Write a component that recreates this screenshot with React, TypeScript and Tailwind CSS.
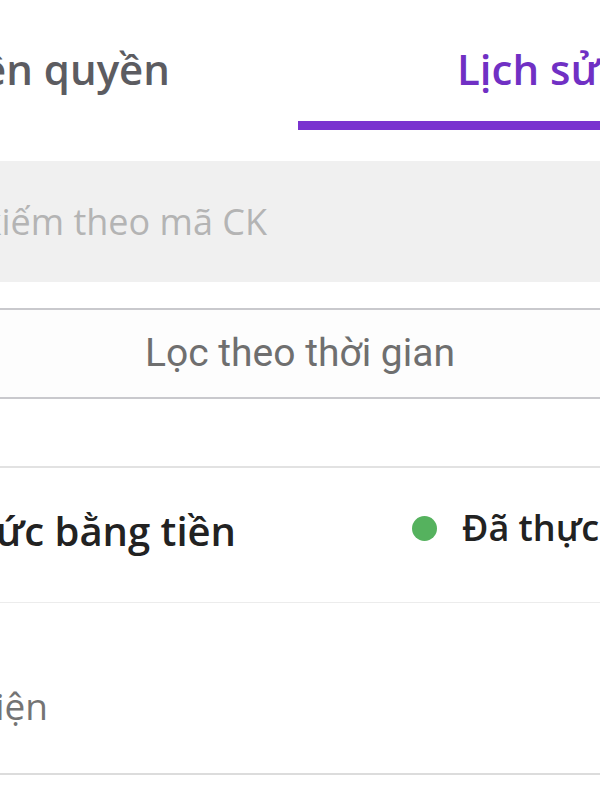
import React from 'react';

const openSans = { fontFamily: '"Open Sans", "Noto Sans", sans-serif' };

export default function App() {
  return (
    <div className="w-[600px] h-[800px] overflow-hidden bg-white" style={openSans}>
      {/* Tabs */}
      <div className="flex h-[130px]">
        <div className="w-[298px] shrink-0 flex justify-end pr-[128px] pt-[48px]">
          <span className="whitespace-nowrap text-[42px] leading-[42px] font-semibold text-[#5c5c61]">
            Thực hiện quyền
          </span>
        </div>
        <div className="w-[468px] shrink-0 pl-[159px] pt-[48px] border-b-[9px] border-[#7a33cf]">
          <span className="whitespace-nowrap text-[42px] leading-[42px] font-semibold text-[#7030c4]">
            Lịch sử
          </span>
        </div>
      </div>

      {/* Search */}
      <div className="mt-[31px] h-[121px] bg-[#f0f0f0] flex items-center">
        <div className="w-[267px] shrink-0 flex justify-end">
          <span className="whitespace-nowrap text-[36px] leading-none text-[#b4b4b4]">
            Tìm kiếm theo mã CK
          </span>
        </div>
      </div>

      {/* Time filter */}
      <div className="mt-[26px] h-[91px] border-y-2 border-[#c9c9cd] bg-[#fdfdfd] flex items-center justify-center">
        <span
          className="whitespace-nowrap text-[39px] leading-none text-[#6f6f6f]"
          style={{ fontFamily: 'Roboto, "Noto Sans", sans-serif' }}
        >
          Lọc theo thời gian
        </span>
      </div>

      {/* History item */}
      <div className="mt-[67px] border-t-2 border-[#e2e2e2]">
        <div className="h-[135px] flex border-b border-[#ececec]">
          <div className="w-[236px] shrink-0 flex justify-end pt-[43px]">
            <span className="whitespace-nowrap text-[40px] leading-[40px] font-semibold text-[#222222]">
              Cổ tức bằng tiền
            </span>
          </div>
          <div className="ml-[176px] pt-[42px] flex items-start">
            <div className="flex items-center gap-[25px]">
              <div className="w-[25px] h-[25px] rounded-full bg-[#55b25e] shrink-0" />
              <span className="whitespace-nowrap text-[36px] leading-[36px] font-semibold text-[#222222]">
                Đã thực hiện
              </span>
            </div>
          </div>
        </div>
        <div className="h-[172px] flex border-b-2 border-[#dcdcdc]">
          <div className="w-[48px] shrink-0 flex justify-end pt-[84px]">
            <span className="whitespace-nowrap text-[37px] leading-[37px] text-[#747474]">
              Thực hiện
            </span>
          </div>
        </div>
      </div>
    </div>
  );
}
